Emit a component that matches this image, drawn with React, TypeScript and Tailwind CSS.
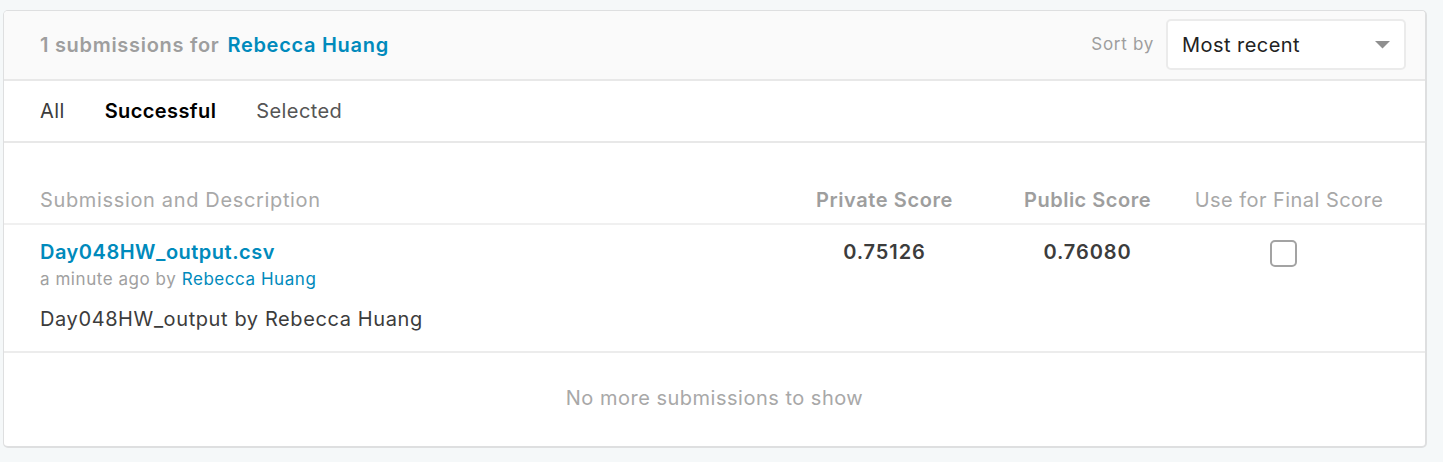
import React from "react";

export default function App() {
  return (
    <div className="w-[1443px] h-[462px] bg-[#f5f8f9] pt-[10px] pl-[3px] overflow-hidden" style={{ fontFamily: "Inter, 'Noto Sans', sans-serif" }}>
      <div className="w-[1424px] h-[438px] bg-white border border-[#dedfe0] border-b-2 border-r-2 rounded-[5px] flex flex-col overflow-hidden">
        {/* header */}
        <div className="h-[70px] bg-[#fafafa] border-b-2 border-[#e8e8e8] flex items-center justify-between pl-[36px] pr-[19px] pb-[1px]">
          <div className="flex items-center gap-[8px] text-[20px] font-semibold tracking-[0.7px]">
            <span className="text-[#9e9e9e]">1 submissions for</span>
            <span className="text-[#008abc]">Rebecca Huang</span>
          </div>
          <div className="flex items-center gap-[12px]">
            <span className="text-[#9e9e9e] text-[17px] tracking-[0.7px]">Sort by</span>
            <div className="w-[240px] h-[51px] bg-white border-2 border-[#ebebeb] rounded-[5px] flex items-center justify-between pl-[14px] pr-[14px]">
              <span className="text-[#222] text-[20px] tracking-[0.45px]">Most recent</span>
              <svg width="15" height="8" viewBox="0 0 15 8"><path d="M0 0 H15 L7.5 7.5 Z" fill="#8f8f8f" /></svg>
            </div>
          </div>
        </div>
        {/* tabs */}
        <div className="h-[62px] border-b-2 border-[#e8e8e8] flex items-center pl-[36px] pb-[1px] text-[20px] tracking-[0.4px] gap-[40px]">
          <span className="text-[#3c3c3c]">All</span>
          <span className="text-black font-semibold">Successful</span>
          <span className="text-[#555]">Selected</span>
        </div>
        {/* table header */}
        <div className="h-[82px] border-b-2 border-[#f0f0f0] flex items-end pb-[8px] pl-[36px] pr-[33px] text-[20px]">
          <div className="flex-1 text-[#a8a8a8] tracking-[0.65px]">Submission and Description</div>
          <div className="w-[203px] text-center text-[#9e9e9e] font-semibold tracking-[0.6px]">Private Score</div>
          <div className="w-[203px] text-center text-[#9e9e9e] font-semibold tracking-[0.5px]">Public Score</div>
          <div className="w-[203px] text-center text-[#a8a8a8] tracking-[0.45px] pr-[3px]">Use for Final Score</div>
        </div>
        {/* row */}
        <div className="h-[128px] border-b-2 border-[#ececec] flex pl-[36px] pr-[33px] pt-[13px]">
          <div className="flex-1 flex flex-col">
            <span className="text-[#008abc] text-[20px] font-semibold leading-[28px] tracking-[0.5px]">Day048HW_output.csv</span>
            <span className="text-[17px] leading-[26px] text-[#a0a0a0] tracking-[0.55px]">a minute ago by <span className="text-[#008abc]">Rebecca Huang</span></span>
            <span className="text-[20px] leading-[28px] mt-[13px] text-[#3c3c3c] tracking-[0.6px]">Day048HW_output by Rebecca Huang</span>
          </div>
          <div className="w-[203px] text-center text-[20px] font-semibold text-[#3c3c3c] leading-[28px] tracking-[0.9px]">0.75126</div>
          <div className="w-[203px] text-center text-[20px] font-semibold text-[#3c3c3c] leading-[28px] tracking-[0.9px]">0.76080</div>
          <div className="w-[203px] flex justify-center pt-[2px] pr-[14px]">
            <div className="w-[27px] h-[27px] border-2 border-[#a3a3a3] rounded-[5px]" />
          </div>
        </div>
        {/* footer */}
        <div className="flex-1 flex items-center justify-center text-[20px] text-[#a8a8a8] tracking-[0.5px] pb-[3px]">
          No more submissions to show
        </div>
      </div>
    </div>
  );
}
